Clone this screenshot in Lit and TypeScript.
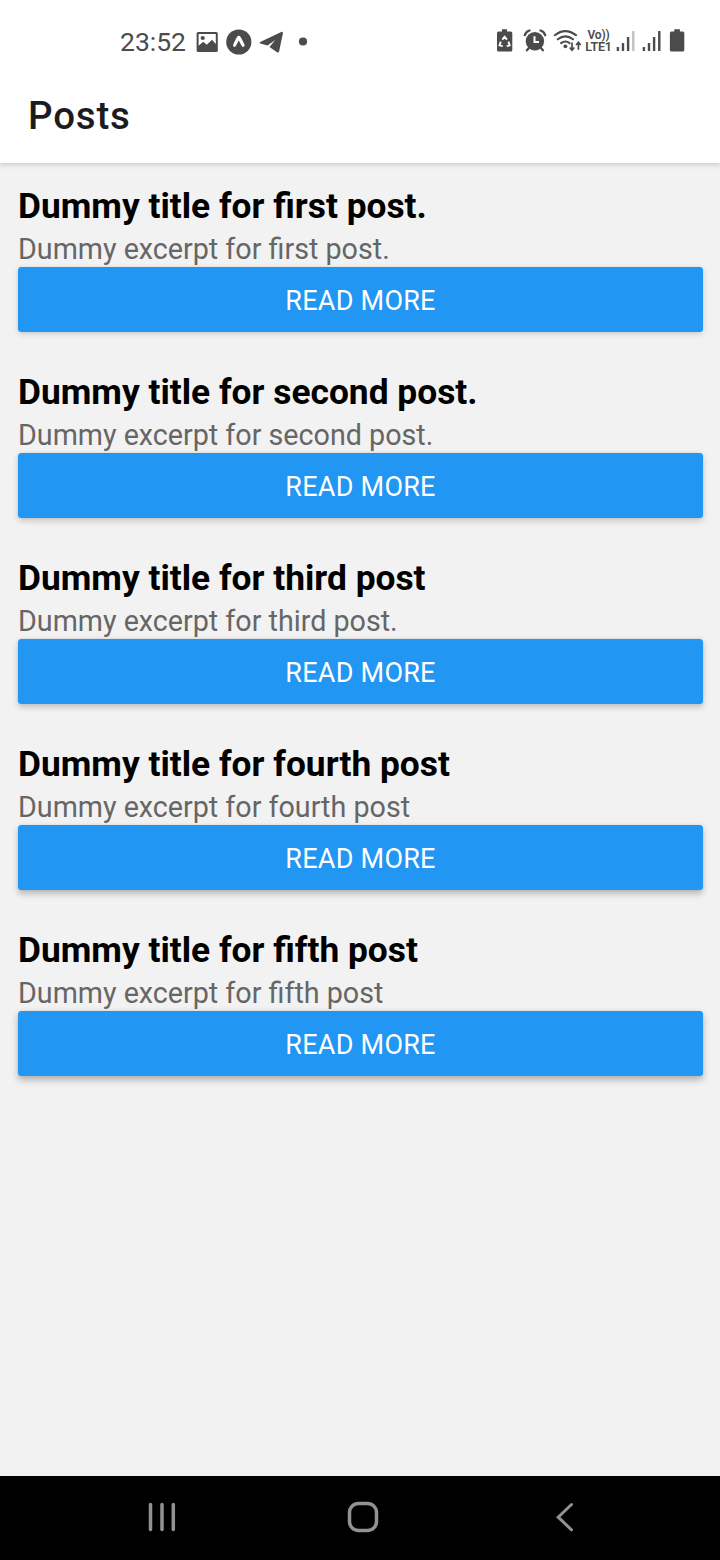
import { LitElement, html, css } from "lit";
import { customElement, property } from "lit/decorators.js";
import { styleMap } from "lit/directives/style-map.js";

interface Post {
  title: string;
  excerpt: string;
}

const POSTS: Post[] = [
  { title: "Dummy title for first post.", excerpt: "Dummy excerpt for first post." },
  { title: "Dummy title for second post.", excerpt: "Dummy excerpt for second post." },
  { title: "Dummy title for third post", excerpt: "Dummy excerpt for third post." },
  { title: "Dummy title for fourth post", excerpt: "Dummy excerpt for fourth post" },
  { title: "Dummy title for fifth post", excerpt: "Dummy excerpt for fifth post" },
];

@customElement("status-bar")
class StatusBar extends LitElement {
  static styles = css`
    :host {
      display: flex;
      justify-content: space-between;
      align-items: center;
      height: 82px;
      padding: 1px 35px 0 120px;
      box-sizing: border-box;
      color: #4b4b4b;
    }
    .group {
      display: flex;
      align-items: center;
    }
    .right {
      padding-bottom: 1px;
    }
    .time {
      width: 76px;
      font-size: 26.5px;
      line-height: 32px;
    }
    svg {
      display: block;
      fill: currentColor;
    }
    .expo {
      margin-left: 8px;
    }
    .plane {
      margin-left: 6px;
    }
    .dot {
      margin-left: 7px;
    }
    .alarm {
      margin-left: 9px;
    }
    .wifi {
      margin-left: 6px;
    }
    .volte {
      display: flex;
      flex-direction: column;
      align-items: center;
      width: 31px;
      font-weight: 600;
    }
    .vo {
      font-size: 12px;
      line-height: 12px;
      letter-spacing: -0.2px;
    }
    .lte {
      font-size: 12.5px;
      line-height: 12px;
      letter-spacing: -0.2px;
    }
    .bars {
      margin-left: 2px;
    }
    .bars + .bars {
      margin-left: 6px;
    }
    .battery {
      margin-left: 7px;
    }
  `;

  private bars(last: number) {
    return html`<svg class="bars" width="20" height="24" viewBox="0 0 20 24">
      <rect x="0.7" y="18" width="2.4" height="4" rx="0.5" />
      <rect x="5.8" y="14" width="2.4" height="8" rx="0.5" />
      <rect x="10.9" y="8" width="2.4" height="14" rx="0.5" />
      <rect x="16.1" y="2" width="2.4" height="20" rx="0.5" opacity=${last} />
    </svg>`;
  }

  render() {
    return html`
      <div class="group">
        <span class="time">23:52</span>
        <svg width="22" height="24" viewBox="196 30 22 24">
          <path
            fill-rule="evenodd"
            d="M198.2 32h18a1.6 1.6 0 0 1 1.6 1.6v16.8a1.6 1.6 0 0 1-1.6 1.6h-18a1.6 1.6 0 0 1-1.6-1.6v-16.8a1.6 1.6 0 0 1 1.6-1.6zM198.6 34v11.8l4.6-4 3.6 3 5.2-5 3.8 4.2V34z"
          />
          <circle cx="202.7" cy="38" r="2.1" />
        </svg>
        <svg class="expo" width="26" height="26" viewBox="0 0 26 26">
          <circle cx="12.8" cy="13" r="12.6" />
          <path
            fill="#fff"
            d="M11.3 7.6c.8-1 2.2-1 3 0 1.2 1.8 3.2 6 4.3 8.4.5 1.2-1.7 2.6-2.5 1.5-.9-1.2-2.2-4.2-3.3-6-1.1 1.8-2.3 4.8-3.3 6-.8 1.1-2.9-.3-2.4-1.5 1-2.4 3-6.6 4.2-8.4z"
          />
        </svg>
        <svg class="plane" width="26" height="26" viewBox="258 29.5 26 26">
          <path
            d="M281.2 32.4 260.2 42.6q-1.400.8 0 1.300l7.300 2.100 7.700-5.600-5.700 7.200 7.600 5.200q1.500.6 2-.9l3.800-18.200q.1-2-1.700-1.300z"
          />
        </svg>
        <svg class="dot" width="24" height="26" viewBox="291 29 24 26">
          <circle cx="303" cy="41.5" r="4.1" />
        </svg>
      </div>
      <div class="group right">
        <svg width="18" height="26" viewBox="496 28 18 26">
          <path
            d="M502 29.3h5v2.2h3.7a1.6 1.6 0 0 1 1.6 1.6v16.9a1.6 1.6 0 0 1-1.6 1.6h-12.1a1.6 1.6 0 0 1-1.6-1.6v-16.9a1.6 1.6 0 0 1 1.6-1.6h3.4z"
          />
          <path
            d="M502.3 39.6 504.6 36.7 506.9 39.6M508.4 41.6 509.7 45.4 506.7 46.2M502.7 46.2 499.5 45.4 500.8 41.6"
            fill="none"
            stroke="#fff"
            stroke-width="1.9"
          />
        </svg>
        <svg class="alarm" width="24" height="26" viewBox="522.5 28 24 26">
          <circle cx="534.4" cy="41.2" r="9.2" />
          <path
            d="M524.3 35.2q1-3.6 4.7-4.7M540 30.500q3.700 1.100 4.700 4.700M528.400 48l-2 2.300M540.400 48l2 2.300"
            fill="none"
            stroke="currentColor"
            stroke-width="2.3"
            stroke-linecap="round"
          />
          <path d="M534 36.3v5.7h4.5" fill="none" stroke="#fff" stroke-width="2" />
        </svg>
        <svg class="wifi" width="30" height="26" viewBox="553.5 28 30 26">
          <g fill="none" stroke="currentColor" stroke-width="2.1" stroke-linecap="round">
            <path d="M555.3 35.2q10.5-8.3 21.2 0" />
            <path d="M558.3 39.3q7.6-6 15.2 0" />
            <path d="M561.6 43.2q4.4-3.4 8.6 0" />
          </g>
          <circle cx="565.9" cy="46.3" r="1.9" />
          <path
            d="M572.5 42.5v7M570.2 47.5l2.3 2.6 2.3-2.6M578.9 49.700v-7M576.600 45l2.300-2.600 2.300 2.600"
            fill="none"
            stroke="currentColor"
            stroke-width="1.7"
          />
        </svg>
        <span class="volte">
          <span class="vo">Vo))</span>
          <span class="lte">LTE1</span>
        </span>
        ${this.bars(0.35)} ${this.bars(1)}
        <svg class="battery" width="16" height="26" viewBox="669 28 16 26">
          <path
            d="M674.3 29.3h5.6v2.2h2.9a1.5 1.5 0 0 1 1.5 1.5v17a1.5 1.5 0 0 1-1.5 1.5h-11.4a1.5 1.5 0 0 1-1.5-1.5v-17a1.5 1.5 0 0 1 1.5-1.5h2.9z"
          />
        </svg>
      </div>
    `;
  }
}

@customElement("post-item")
class PostItem extends LitElement {
  @property({ attribute: false }) post!: Post;
  @property({ type: Number }) depth = 0;

  static styles = css`
    :host {
      display: flex;
      flex-direction: column;
      height: 186px;
    }
    .title {
      margin: 0;
      font-size: 35.35px;
      line-height: 43px;
      font-weight: 700;
      color: #000;
      white-space: nowrap;
    }
    .excerpt {
      margin: 0;
      padding-top: 4px;
      font-size: 28.7px;
      line-height: 35px;
      color: #666;
      white-space: nowrap;
    }
    .more {
      display: block;
      height: 65px;
      padding: 3px 0 0;
      border: 0;
      border-radius: 3.5px;
      background: #2196f3;
      color: #fff;
      font: 400 27px/62px Roboto, sans-serif;
      letter-spacing: 0.25px;
      text-transform: uppercase;
    }
  `;

  render() {
    const shadow = `0 ${2 + this.depth * 0.4}px ${6 + this.depth * 0.3}px rgba(0,0,0,${0.15 + this.depth * 0.03}), 0 0 2px rgba(0,0,0,.1)`;
    return html`
      <h2 class="title">${this.post.title}</h2>
      <p class="excerpt">${this.post.excerpt}</p>
      <button class="more" style=${styleMap({ boxShadow: shadow })}>Read more</button>
    `;
  }
}

@customElement("nav-bar")
class NavBar extends LitElement {
  static styles = css`
    :host {
      display: flex;
      align-items: center;
      justify-content: space-between;
      height: 84px;
      padding: 0 138px 2px 144px;
      box-sizing: border-box;
      background: #000;
    }
    svg {
      display: block;
      fill: none;
      stroke: #929292;
      stroke-width: 3.5;
      stroke-linecap: round;
    }
  `;

  render() {
    return html`
      <svg width="36" height="36" viewBox="0 0 36 36">
        <path d="M6.5 5.5v25M18 5.5v25M29.3 5.5v25" />
      </svg>
      <svg width="36" height="36" viewBox="0 0 36 36">
        <rect x="4.5" y="4.5" width="27" height="27" rx="9" />
      </svg>
      <svg width="36" height="36" viewBox="0 0 36 36">
        <path d="M25.5 5.5 12.2 18.2 25.5 30.8" stroke-width="3" />
      </svg>
    `;
  }
}

@customElement("app-root")
class AppRoot extends LitElement {
  static styles = css`
    :host {
      display: flex;
      flex-direction: column;
      height: 1560px;
      background: #f2f2f2;
      font-family: Roboto, sans-serif;
    }
    .header {
      height: 163px;
      background: #fff;
      box-shadow: 0 1px 6px rgba(0, 0, 0, 0.2);
    }
    .heading {
      margin: 0;
      padding: 9px 28px 0;
      font-size: 38.5px;
      line-height: 50px;
      font-weight: 500;
      letter-spacing: 0.8px;
      color: #1c1c1e;
    }
    .list {
      flex: 1;
      padding: 22px 17px 0 18px;
    }
  `;

  render() {
    return html`
      <header class="header">
        <status-bar></status-bar>
        <h1 class="heading">Posts</h1>
      </header>
      <main class="list">
        ${POSTS.map((post, i) => html`<post-item .post=${post} .depth=${i}></post-item>`)}
      </main>
      <nav-bar></nav-bar>
    `;
  }
}
